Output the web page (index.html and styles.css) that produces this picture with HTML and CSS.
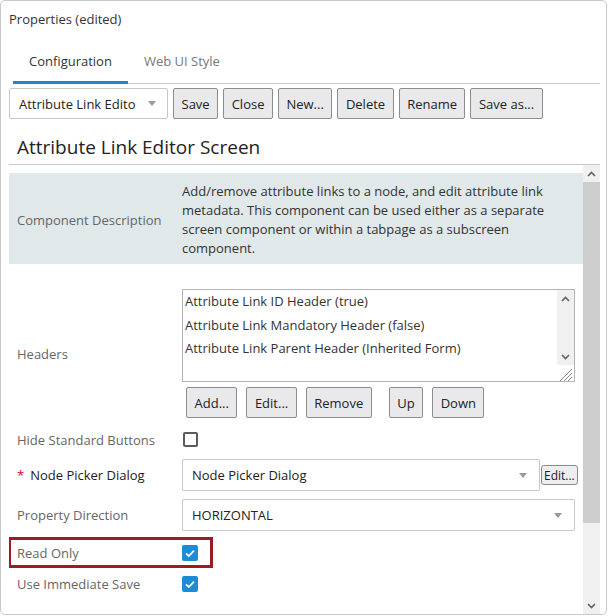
FILE: index.html
```html
<!DOCTYPE html>
<html>
<head>
<meta charset="utf-8">
<link rel="stylesheet" href="styles.css">
</head>
<body>
<div class="frame">
  <div class="title">Properties (edited)</div>
  <div class="tabs">
    <div class="tab active">Configuration</div>
    <div class="tab">Web UI Style</div>
  </div>
  <div class="toolbar">
    <div class="combo"><span>Attribute Link Edito</span><span class="caret"></span></div>
    <button class="btn">Save</button>
    <button class="btn">Close</button>
    <button class="btn">New...</button>
    <button class="btn">Delete</button>
    <button class="btn">Rename</button>
    <button class="btn">Save as...</button>
  </div>
  <h1 class="heading">Attribute Link Editor Screen</h1>
  <div class="scroller">
    <div class="content">
      <div class="row desc">
        <div class="label">Component Description</div>
        <div class="value">Add/remove attribute links to a node, and edit attribute link<br>metadata. This component can be used either as a separate<br>screen component or within a tabpage as a subscreen<br>component.</div>
      </div>
      <div class="row headers">
        <div class="label">Headers</div>
        <div class="value">
          <div class="listbox">
            <div class="items">
              <div>Attribute Link ID Header (true)</div>
              <div>Attribute Link Mandatory Header (false)</div>
              <div>Attribute Link Parent Header (Inherited Form)</div>
            </div>
            <div class="lscroll">
              <div class="ls-bar">
                <div class="ls-btn"><svg width="9" height="6" viewBox="0 0 9 6"><path d="M1 5 L4.5 1.5 L8 5" fill="none" stroke="#606060" stroke-width="1.6"/></svg></div>
                <div class="ls-btn"><svg width="9" height="6" viewBox="0 0 9 6"><path d="M1 1 L4.5 4.5 L8 1" fill="none" stroke="#606060" stroke-width="1.6"/></svg></div>
              </div>
              <div class="grip"><svg width="17" height="16" viewBox="0 0 17 16"><path d="M15 4 L3 16 M15 8 L7 16 M15 12 L11 16" stroke="#8a8a8a" stroke-width="1"/></svg></div>
            </div>
          </div>
          <div class="hbtns">
            <button class="btn">Add...</button>
            <button class="btn">Edit...</button>
            <button class="btn">Remove</button>
            <button class="btn up">Up</button>
            <button class="btn">Down</button>
          </div>
        </div>
      </div>
      <div class="row cbrow hide">
        <div class="label">Hide Standard Buttons</div>
        <div class="value"><span class="cb"></span></div>
      </div>
      <div class="row node">
        <div class="label dark"><span class="req">*</span>Node Picker Dialog</div>
        <div class="value flexv">
          <div class="select w357"><span>Node Picker Dialog</span><span class="caret"></span></div>
          <button class="mini">Edit...</button>
        </div>
      </div>
      <div class="row prop">
        <div class="label">Property Direction</div>
        <div class="value">
          <div class="select w393"><span>HORIZONTAL</span><span class="caret"></span></div>
        </div>
      </div>
      <div class="row cbrow readonly">
        <div class="hl"></div>
        <div class="label">Read Only</div>
        <div class="value"><span class="cb checked"><svg width="16" height="16" viewBox="0 0 16 16"><path d="M4 8.3 L6.8 11 L12 5.6" fill="none" stroke="#fff" stroke-width="1.8"/></svg></span></div>
      </div>
      <div class="row cbrow">
        <div class="label">Use Immediate Save</div>
        <div class="value"><span class="cb checked"><svg width="16" height="16" viewBox="0 0 16 16"><path d="M4 8.3 L6.8 11 L12 5.6" fill="none" stroke="#fff" stroke-width="1.8"/></svg></span></div>
      </div>
    </div>
    <div class="vscroll">
      <div class="vs-btn"><svg width="9" height="6" viewBox="0 0 9 6"><path d="M1 5 L4.5 1.5 L8 5" fill="none" stroke="#606060" stroke-width="1.6"/></svg></div>
      <div class="thumb"></div>
      <div class="vs-track"></div>
      <div class="vs-btn"><svg width="9" height="6" viewBox="0 0 9 6"><path d="M1 1 L4.5 4.5 L8 1" fill="none" stroke="#606060" stroke-width="1.6"/></svg></div>
    </div>
  </div>
</div>
</body>
</html>
```
FILE: styles.css
```css
* { box-sizing: border-box; }
body {
  margin: 0;
  font-family: "Open Sans", "Noto Sans", sans-serif;
  font-size: 13px;
  color: #333;
  background: #fff;
}
.frame {
  width: 607px;
  height: 615px;
  border: 1px solid #c9c9c9;
  border-radius: 5px;
  display: flex;
  flex-direction: column;
  overflow: hidden;
}
.title {
  padding: 9px 8px 0;
  line-height: 18px;
  color: #333;
}
.tabs {
  display: flex;
  margin: 14px 6px 0 12px;
  border-bottom: 1px solid #c8c8c8;
}
.tab {
  padding: 10px 16px 11px;
  line-height: 18px;
  color: #777;
  border-bottom: 3px solid transparent;
  margin-bottom: -1px;
}
.tab.active {
  color: #333;
  border-bottom-color: #1e87c9;
}
.toolbar {
  display: flex;
  gap: 5px;
  margin: 4px 6px 0 8px;
  height: 31px;
}
.combo {
  width: 159px;
  height: 31px;
  border: 1px solid #c8c8c8;
  border-radius: 2px;
  display: flex;
  align-items: center;
  justify-content: space-between;
  padding: 0 11px 0 9px;
  color: #222;
}
.caret {
  width: 0;
  height: 0;
  border-left: 4.5px solid transparent;
  border-right: 4.5px solid transparent;
  border-top: 5px solid #9a9a9a;
}
.btn {
  height: 31px;
  padding: 0 7.5px;
  border: 1px solid #8d8d8d;
  border-radius: 2px;
  background: #e9e9ec;
  font: inherit;
  color: #222;
  margin: 0;
}
.heading {
  margin: 16px 6px 0 8px;
  padding: 0 0 5px 8px;
  font-size: 19px;
  font-weight: normal;
  line-height: 24px;
  border-bottom: 1px solid #c8c8c8;
  color: #222;
}
.scroller {
  flex: 1;
  display: flex;
  margin: 0 6px 0 8px;
  min-height: 0;
}
.content {
  flex: 1;
  padding-top: 8px;
  overflow: hidden;
}
.vscroll {
  width: 17px;
  display: flex;
  flex-direction: column;
  background: #f0f0f0;
}
.vs-btn {
  height: 17px;
  display: flex;
  align-items: center;
  justify-content: center;
}
.thumb {
  height: 341px;
  background: #cdcdcd;
}
.vs-track { flex: 1; }
.row {
  display: grid;
  grid-template-columns: 173px 1fr;
  align-items: center;
  position: relative;
}
.label {
  padding-left: 8px;
  color: #666;
  white-space: nowrap;
}
.label.dark { color: #222; }
.req {
  color: #d0021b;
  margin-right: 6px;
}
.desc {
  background: #e0e8ea;
  padding: 9px 0 6px;
}
.desc .value {
  line-height: 19px;
  color: #333;
  white-space: nowrap;
}
.headers { margin-top: 25px; }
.listbox {
  width: 393px;
  height: 93px;
  border: 1px solid #b3b3b3;
  display: flex;
}
.items {
  flex: 1;
  padding-left: 2px;
  line-height: 23.5px;
  color: #333;
}
.lscroll {
  width: 17px;
  display: flex;
  flex-direction: column;
}
.ls-bar {
  flex: 1;
  background: #f0f0f0;
  display: flex;
  flex-direction: column;
  justify-content: space-between;
}
.ls-btn {
  height: 17px;
  display: flex;
  align-items: center;
  justify-content: center;
}
.grip { height: 16px; }
.grip svg { display: block; }
.hbtns {
  display: flex;
  gap: 9px;
  margin-top: 5px;
  padding-left: 4px;
}
.hbtns .up { margin-left: 8px; }
.cbrow { height: 31px; }
.hide { margin-top: 6px; }
.cb {
  display: block;
  width: 15px;
  height: 15px;
  border: 2px solid #5c5c5c;
  border-radius: 2px;
  margin-left: 1px;
}
.cb.checked {
  width: 16px;
  height: 16px;
  border: none;
  background: #1c8dd4;
  margin-left: 0;
}
.cb svg { display: block; }
.node { margin-top: 4px; }
.prop { margin-top: 8px; }
.readonly { margin-top: 6px; }
.flexv {
  display: flex;
  align-items: center;
}
.select {
  height: 32px;
  border: 1px solid #c8c8c8;
  border-radius: 2px;
  display: flex;
  align-items: center;
  justify-content: space-between;
  padding: 0 12px 0 9px;
  color: #222;
}
.w357 { width: 358px; }
.w393 { width: 393px; }
.mini {
  height: 20px;
  padding: 0 2px;
  border: 1px solid #8a8a8a;
  border-radius: 3px;
  background: #eeeef2;
  font: inherit;
  font-size: 12px;
  color: #222;
  margin: 0 0 0 1px;
}
.hl {
  position: absolute;
  left: -1px;
  top: 0;
  width: 205px;
  height: 31px;
  border: 3px solid #9b1c23;
}
```
